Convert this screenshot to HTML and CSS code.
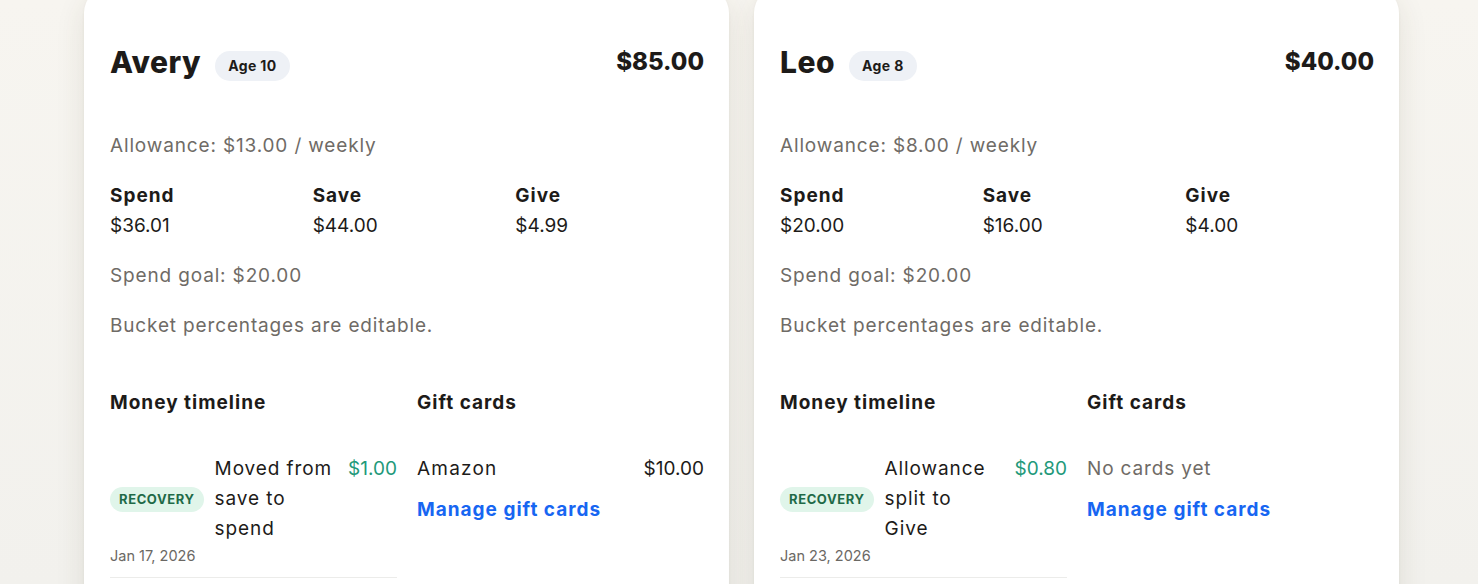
FILE: index.html
```html
<!DOCTYPE html>
<html lang="en">
<head>
<meta charset="utf-8">
<title>Kids</title>
<link rel="stylesheet" href="styles.css">
</head>
<body>
<main class="board">
  <section class="kid-card">
    <header class="kid-head">
      <div class="kid-id">
        <h2 class="kid-name">Avery</h2>
        <span class="age-badge">Age 10</span>
      </div>
      <div class="kid-total">$85.00</div>
    </header>
    <p class="muted allowance">Allowance: $13.00 / weekly</p>
    <div class="buckets">
      <div class="bucket"><div class="bucket-label">Spend</div><div class="bucket-value">$36.01</div></div>
      <div class="bucket"><div class="bucket-label">Save</div><div class="bucket-value">$44.00</div></div>
      <div class="bucket"><div class="bucket-label">Give</div><div class="bucket-value">$4.99</div></div>
    </div>
    <p class="muted goal">Spend goal: $20.00</p>
    <p class="muted hint">Bucket percentages are editable.</p>
    <div class="lower">
      <div class="timeline">
        <h3 class="section-title">Money timeline</h3>
        <ul class="events">
          <li class="event">
            <div class="event-main">
              <span class="tag">RECOVERY</span>
              <span class="event-text">Moved from save to spend</span>
              <span class="event-amount">$1.00</span>
            </div>
            <div class="event-date">Jan 17, 2026</div>
          </li>
        </ul>
      </div>
      <div class="gifts">
        <h3 class="section-title">Gift cards</h3>
        <div class="gift-body">
          <div class="gift-row"><span class="gift-name">Amazon</span><span class="gift-amount">$10.00</span></div>
          <a class="manage-link" href="#">Manage gift cards</a>
        </div>
      </div>
    </div>
  </section>

  <section class="kid-card">
    <header class="kid-head">
      <div class="kid-id">
        <h2 class="kid-name">Leo</h2>
        <span class="age-badge">Age 8</span>
      </div>
      <div class="kid-total">$40.00</div>
    </header>
    <p class="muted allowance">Allowance: $8.00 / weekly</p>
    <div class="buckets">
      <div class="bucket"><div class="bucket-label">Spend</div><div class="bucket-value">$20.00</div></div>
      <div class="bucket"><div class="bucket-label">Save</div><div class="bucket-value">$16.00</div></div>
      <div class="bucket"><div class="bucket-label">Give</div><div class="bucket-value">$4.00</div></div>
    </div>
    <p class="muted goal">Spend goal: $20.00</p>
    <p class="muted hint">Bucket percentages are editable.</p>
    <div class="lower">
      <div class="timeline">
        <h3 class="section-title">Money timeline</h3>
        <ul class="events">
          <li class="event">
            <div class="event-main">
              <span class="tag">RECOVERY</span>
              <span class="event-text">Allowance split to Give</span>
              <span class="event-amount">$0.80</span>
            </div>
            <div class="event-date">Jan 23, 2026</div>
          </li>
        </ul>
      </div>
      <div class="gifts">
        <h3 class="section-title">Gift cards</h3>
        <div class="gift-body">
          <div class="muted gift-empty">No cards yet</div>
          <a class="manage-link" href="#">Manage gift cards</a>
        </div>
      </div>
    </div>
  </section>
</main>
</body>
</html>
```
FILE: styles.css
```css
* { box-sizing: border-box; }

html, body {
  margin: 0;
  padding: 0;
  height: 100%;
}

body {
  font-family: "Inter", "Open Sans", sans-serif;
  font-size: 19px;
  color: #1d1b19;
  font-variant-numeric: proportional-nums;
  background: linear-gradient(180deg, #f7f5f0 0%, #f2f1ed 100%);
  overflow: hidden;
}

.board {
  display: flex;
  gap: 25px;
  padding-left: 84px;
  margin-top: -13px;
}

.kid-card {
  width: 645px;
  height: 640px;
  background: #ffffff;
  border-radius: 26px;
  padding: 55px 25px 0 26px;
  box-shadow: 0 10px 30px rgba(70, 60, 40, 0.11), 0 1px 3px rgba(70, 60, 40, 0.06);
}

.kid-head {
  display: flex;
  align-items: center;
  justify-content: space-between;
  height: 40px;
}

.kid-id {
  display: flex;
  align-items: center;
  gap: 14px;
}

.kid-name {
  margin: 0;
  font-size: 30px;
  font-weight: 800;
  line-height: 40px;
  letter-spacing: 0.5px;
}

.age-badge {
  display: inline-flex;
  align-items: center;
  height: 30px;
  padding: 0 13px;
  border-radius: 15px;
  background: #eef1f6;
  font-size: 14px;
  font-weight: 700;
  letter-spacing: 0.4px;
  margin-top: 7px;
}

.kid-total {
  font-size: 24px;
  font-weight: 800;
  line-height: 40px;
  margin-top: -1px;
}

.muted {
  color: #6f6b66;
  letter-spacing: 0.85px;
}

p { margin: 0; }

.allowance {
  margin-top: 50px;
  line-height: 28px;
}

.buckets {
  margin-top: 21px;
  display: grid;
  grid-template-columns: repeat(3, 1fr);
  column-gap: 14px;
}

.bucket-label {
  font-weight: 700;
  line-height: 30px;
  letter-spacing: 1px;
}

.bucket-value {
  line-height: 30px;
}

.goal {
  margin-top: 21px;
  line-height: 28px;
}

.hint {
  margin-top: 22px;
  line-height: 28px;
}

.lower {
  margin-top: 49px;
  display: grid;
  grid-template-columns: 1fr 1fr;
  column-gap: 20px;
}

.section-title {
  margin: 0;
  font-size: 19px;
  font-weight: 700;
  line-height: 28px;
  letter-spacing: 1px;
}

.events {
  list-style: none;
  margin: 37px 0 0;
  padding: 0;
}

.event {
  padding-bottom: 11px;
  border-bottom: 1px solid #ececea;
}

.event-main {
  display: grid;
  grid-template-columns: auto 1fr auto;
  column-gap: 11px;
  align-items: center;
}

.tag {
  display: inline-flex;
  align-items: center;
  justify-content: center;
  height: 25px;
  padding: 0 9px;
  border-radius: 13px;
  background: #e0f5ea;
  color: #1f6a48;
  font-size: 13px;
  font-weight: 700;
  letter-spacing: 0.6px;
}

.event-text {
  line-height: 30px;
  letter-spacing: 0.9px;
  padding-right: 4px;
}

.event-amount {
  align-self: start;
  line-height: 30px;
  color: #23997a;
}

.event-date {
  margin-top: 2px;
  font-size: 14.5px;
  line-height: 20px;
  color: #6b6864;
}

.gift-body {
  margin-top: 37px;
}

.gift-row {
  display: flex;
  justify-content: space-between;
  line-height: 30px;
}

.gift-name {
  letter-spacing: 1.2px;
}

.gift-empty {
  line-height: 30px;
}

.manage-link {
  display: block;
  margin-top: 12px;
  line-height: 28px;
  color: #1766f2;
  font-weight: 700;
  letter-spacing: 1px;
  text-decoration: none;
}
```
